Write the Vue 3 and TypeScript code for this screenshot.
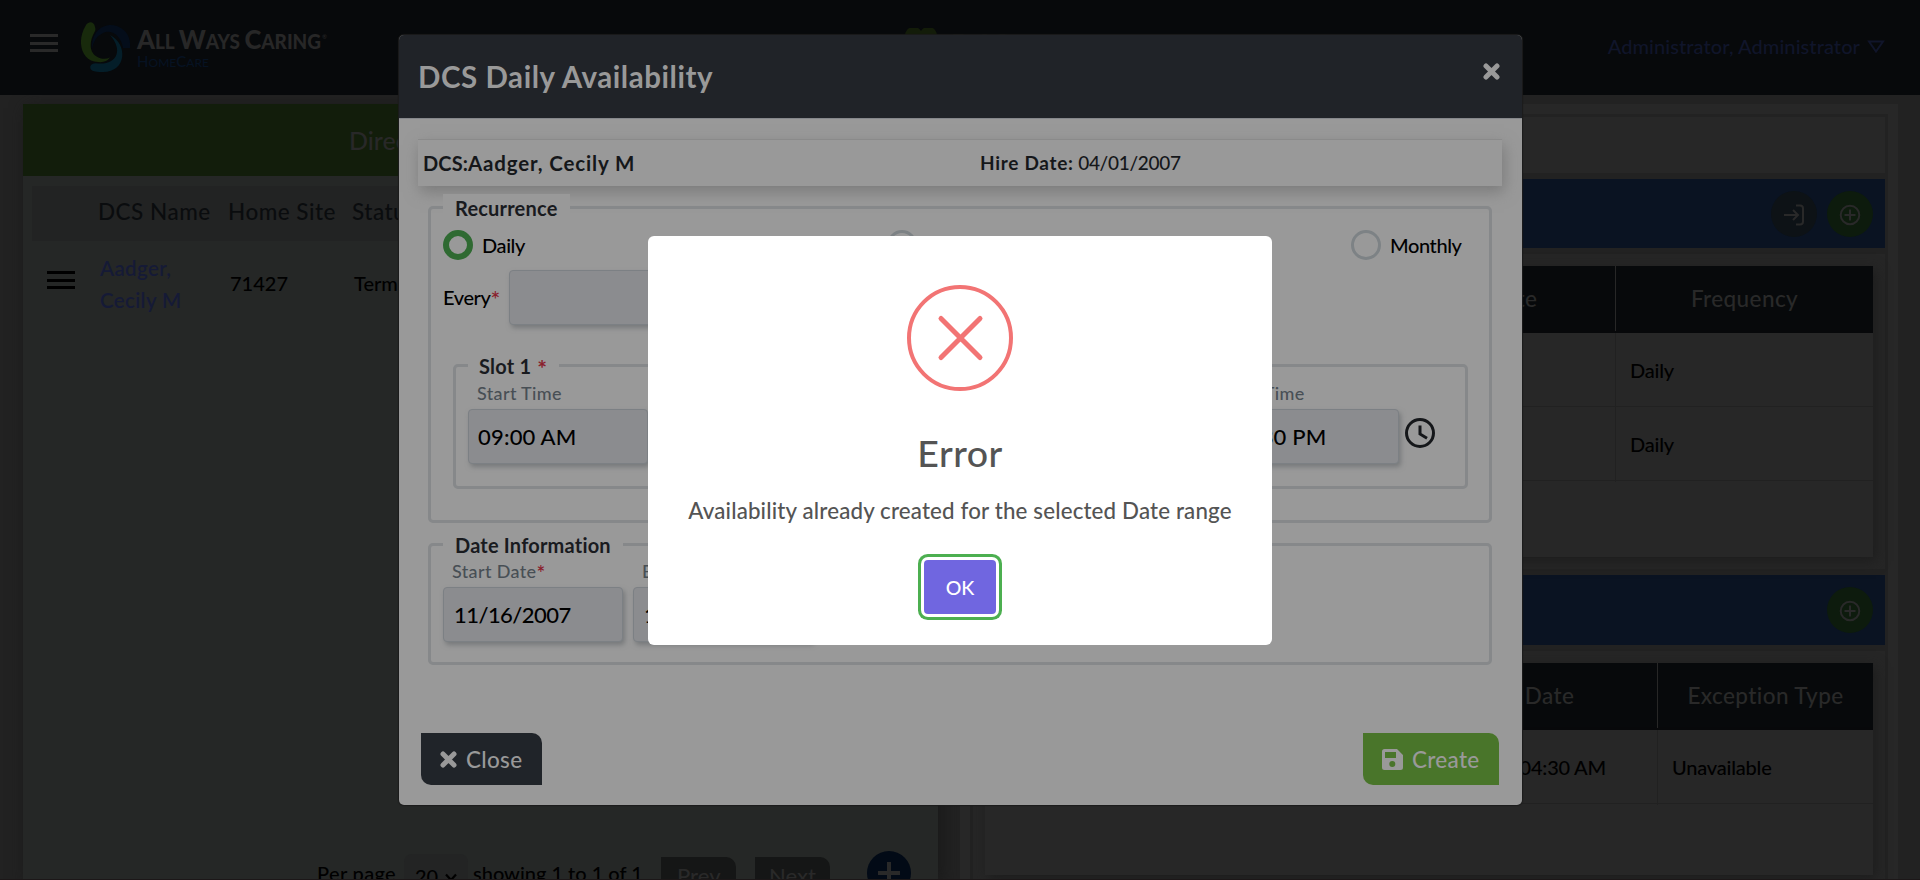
<script setup lang="ts">
interface DirectoryRow { name: string; site: string; status: string }
interface Grid { id: string; login: boolean; heads: string[]; rows: string[][] }

const rows: DirectoryRow[] = [{ name: 'Aadger, Cecily M', site: '71427', status: 'Terminated' }]
const grids: Grid[] = [
  { id: 'availability', login: true, heads: ['End Date', 'Frequency'], rows: [['', 'Daily'], ['', 'Daily']] },
  { id: 'exception', login: false, heads: ['End Date', 'Exception Type'], rows: [['04:30 AM', 'Unavailable']] },
]
const recurrences: string[] = ['Daily', 'Weekly', 'Monthly']
const selected = 'Daily'
</script>

<template>
  <div class="page">
    <header class="topbar">
      <div class="burger"><i /><i /><i /></div>
      <svg class="brand" width="250" height="56" viewBox="0 0 250 56">
        <path class="b-green" d="M14 5C13 -1 7 -1 4.500 4C-5 20 1 40 17 40Q25 41 29 35.500Q25 37.500 20 36.500C7 33 8 20 13.500 10Q15 8 14 5Z" />
        <path class="b-navy" d="M11 27C10 10 22 0 36 4C46 8 50 16 49 26H42C40 14 31 7 22 11Q13 15 11 27Z" />
        <path class="b-cyan" d="M29 13C47 22 46 50 22 50Q15 50 11 48.500Q8 46 10 43Q12 40.500 17 41.500C35 43 43 29 29 13Z" />
        <text class="b-name" x="56" y="27" textLength="184" lengthAdjust="spacingAndGlyphs"><tspan class="cap">A</tspan>LL <tspan class="cap">W</tspan>AYS <tspan class="cap">C</tspan>ARING</text>
        <text class="b-reg" x="241" y="17">®</text>
        <text class="b-sub" x="56" y="44.500" textLength="72" lengthAdjust="spacingAndGlyphs"><tspan class="cap2">H</tspan>OME<tspan class="cap2">C</tspan>ARE</text>
      </svg>
      <div class="center-logo">
        <svg width="34" height="20" viewBox="0 0 34 20"><path d="M0 10A8.800 9.500 0 0 1 16 3A8.800 9.500 0 0 1 32 10L16 20Z" /></svg>
        <span>R AS</span>
      </div>
      <div class="user">Administrator, Administrator
        <svg width="18" height="14" viewBox="0 0 18 14"><path d="M2 1.500H16L9 11.500Z" /></svg>
      </div>
    </header>

    <main class="content">
      <section class="directory">
        <h2>Direct Care Staff</h2>
        <div class="dir-table">
          <div class="dir-row dir-head"><span /><span>DCS Name</span><span>Home Site</span><span>Status</span></div>
          <div v-for="r in rows" :key="r.name" class="dir-row dir-item">
            <div class="burger dark"><i /><i /><i /></div>
            <a>{{ r.name }}</a><span>{{ r.site }}</span><span>{{ r.status }}</span>
          </div>
        </div>
        <div class="pager">
          <span class="per">Per page</span>
          <span class="select">20<svg width="12" height="9" viewBox="0 0 12 9"><path d="M1 1.500L6 7L11 1.500" /></svg></span>
          <span class="showing">showing 1 to 1 of 1</span>
          <span class="pbtn">Prev</span>
          <span class="pbtn next">Next</span>
          <svg class="add" width="44" height="44" viewBox="0 0 44 44"><circle cx="22" cy="22" r="22" /><path d="M22 11V33M11 22H33" /></svg>
        </div>
      </section>

      <section class="details">
        <div class="frame">
          <div class="blank" />
          <template v-for="g in grids" :key="g.id">
            <div class="blue" :class="g.id">
              <span v-if="g.login" class="round slate">
                <svg width="24" height="24" viewBox="0 0 24 24"><path d="M2 12H16M11 7L16 12L11 17M14 2.500H18Q21 2.500 21 5.500V18.500Q21 21.500 18 21.500H14" /></svg>
              </span>
              <span class="round green">
                <svg width="24" height="24" viewBox="0 0 24 24"><circle cx="12" cy="12" r="9.300" /><path d="M12 6.500V17.500M6.500 12H17.500" /></svg>
              </span>
            </div>
            <div class="grid-wrap" :class="g.id">
              <div class="grid">
                <div class="g-row g-head"><span v-for="h in g.heads" :key="h">{{ h }}</span></div>
                <div v-for="(r, i) in g.rows" :key="i" class="g-row g-item"><span v-for="(c, j) in r" :key="j">{{ c }}</span></div>
              </div>
            </div>
          </template>
        </div>
      </section>
    </main>
    <div class="footline" />

    <div class="layer">
      <div class="modal">
        <div class="m-head">
          <h1>DCS Daily Availability</h1>
          <svg class="m-x" width="17" height="17" viewBox="0 0 17 17"><path d="M3 3L14 14M14 3L3 14" /></svg>
        </div>
        <div class="info">
          <div class="who"><span class="dcs">DCS:</span><b>Aadger, Cecily M</b></div>
          <div class="hire"><b>Hire Date:</b> <span>04/01/2007</span></div>
        </div>
        <fieldset class="recur">
          <legend>Recurrence</legend>
          <div class="radios">
            <label v-for="r in recurrences" :key="r" :class="['r-' + r.toLowerCase()]"><i :class="{ on: r === selected }" />{{ r }}</label>
          </div>
          <div class="every"><span>Every<em>*</em></span><div class="input" /></div>
          <fieldset class="slot">
            <legend>Slot 1 <em>*</em></legend>
            <div class="slot-row">
              <div class="field"><label>Start Time</label><div class="input">09:00 AM</div></div>
              <div class="end">
                <div class="field"><label>End Time</label><div class="input">04:30 PM</div></div>
                <svg class="clock" width="30" height="30" viewBox="0 0 30 30"><circle cx="15" cy="15" r="13.500" /><path d="M15 7.500V16L22 20.200" /></svg>
              </div>
            </div>
          </fieldset>
        </fieldset>
        <fieldset class="dates">
          <legend>Date Information</legend>
          <div class="date-row">
            <div class="field"><label>Start Date<em>*</em></label><div class="input date">11/16/2007</div></div>
            <div class="field"><label>End Date<em>*</em></label><div class="input date">11/16/2007</div></div>
          </div>
        </fieldset>
        <div class="m-foot">
          <button class="close"><svg width="17" height="17" viewBox="0 0 17 17"><path d="M3 3L14 14M14 3L3 14" /></svg><span>Close</span></button>
          <button class="create">
            <svg width="21" height="21" viewBox="0 0 21 21"><path fill-rule="evenodd" d="M2.500 0H15L21 6V18.500Q21 21 18.500 21H2.500Q0 21 0 18.500V2.500Q0 0 2.500 0ZM3 3V9H14V3ZM10.300 12A3 3 0 1 0 10.300 18A3 3 0 1 0 10.300 12Z" /></svg><span>Create</span>
          </button>
        </div>
      </div>
    </div>

    <div class="layer">
      <div class="alert">
        <svg width="106" height="106" viewBox="0 0 106 106"><circle cx="53" cy="53" r="51" /><path class="bar" d="M34 33.500L73 72.500M73 33.500L34 72.500" /></svg>
        <h3>Error</h3>
        <p>Availability already created for the selected Date range</p>
        <button>OK</button>
      </div>
    </div>
  </div>
</template>

<style>
html, body { margin: 0; background: #222; overflow: hidden; }
</style>

<style scoped>
* { box-sizing: border-box; }
.page { position: relative; height: 880px; overflow: hidden; display: flex; flex-direction: column; background: #222; font-family: Lato, "Liberation Sans", sans-serif; font-weight: 500; font-size: 20px; }
h1, h2, h3, p, fieldset, legend, button { margin: 0; padding: 0; font-family: inherit; }
em { font-style: normal; color: #8a202c; font-size: 1.15em; line-height: 0; vertical-align: -3px; }
svg { display: block; flex: none; }

.topbar { position: relative; height: 95px; flex: none; background: #07090b; display: flex; align-items: flex-start; padding-left: 30px; }
.burger { width: 28px; height: 18px; display: flex; flex-direction: column; justify-content: space-between; margin-top: 34px; }
.burger i { height: 3px; background: #292929; }
.burger.dark i { background: #000; }
.brand { margin: 22px 0 0 23px; }
.b-green { fill: #182a0c; }
.b-navy { fill: #040d1a; }
.b-cyan { fill: #041e29; }
.b-name { font-weight: 900; font-size: 20px; fill: #272727; }
.cap { font-size: 27px; }
.b-reg { font-size: 6px; fill: #272727; }
.b-sub { font-size: 12px; fill: #061222; }
.cap2 { font-size: 15px; }
.center-logo { display: flex; gap: 12px; margin: 28px 0 0 574px; color: #1c1c1c; fill: #131c09; }
.center-logo span { font-size: 28px; line-height: 32px; font-weight: 700; }
.user { margin: 30px 35px 0 auto; display: flex; gap: 7px; font-size: 20px; letter-spacing: 0.08px; line-height: 33px; color: #10152a; }
.user svg { margin-top: 10px; fill: none; stroke: #10152a; stroke-width: 2; }

.content { flex: 1; min-height: 0; display: flex; gap: 22px; padding: 9px 22px 0 23px; }
.directory { width: 915px; flex: none; background: #252726; display: flex; flex-direction: column; box-shadow: 4px 4px 16px #191919; }
.directory h2 { height: 72px; background: #121d0b; color: #282828; font-size: 25px; font-weight: 500; line-height: 72px; padding-left: 326px; }
.dir-table { margin: 10px 9px 0; flex: 1; }
.dir-row { display: grid; grid-template-columns: 66px 130px 124px 1fr; }
.dir-head { height: 55px; align-items: start; background: #222323; color: #0a0c0e; font-size: 22.5px; letter-spacing: 0.5px; line-height: 52px; }
.dir-item { padding-top: 11px; line-height: 32px; color: #000; }
.dir-item .burger { margin: 19px 0 0 15px; }
.dir-item a { width: 90px; padding-left: 2px; box-sizing: content-box; color: #151a36; font-size: 20.5px; font-weight: 600; letter-spacing: 0.35px; }
.dir-item span { padding: 15px 0 0 2px; }
.pager { display: flex; height: 30px; flex: none; color: #000; padding-left: 294px; line-height: 34px; }
.per { width: 87px; padding-top: 6px; letter-spacing: 0.35px; }
.select { width: 64px; height: 44px; margin-top: 4px; padding: 1px 0 0 11px; background: #232424; border-radius: 8px; display: flex; gap: 7px; line-height: 42px; }
.select svg { margin-top: 18px; fill: none; stroke: #000; stroke-width: 2.2; }
.showing { width: 193px; padding: 6px 0 0 5px; }
.pbtn { width: 75px; height: 52px; margin-top: 7px; background: #151616; color: #292929; border-radius: 0 10px 0 10px; font-size: 22px; line-height: 38px; padding-left: 16px; }
.next { margin-left: 19px; padding-left: 14px; }
.add { margin: 1px 0 0 37px; fill: #020a16; stroke: #292929; stroke-width: 4; }
.add circle { stroke: none; }

.details { width: 938px; padding: 10px 10px 0; background: #272727; }
.frame { height: 770px; border: 3px solid #222; border-bottom: 0; background: #222; }
.blank { height: 56px; background: #272727; }
.blue { display: flex; justify-content: flex-end; gap: 10px; align-items: center; height: 69px; margin-top: 6px; padding-right: 12px; background: #0a1322; }
.blue.exception { height: 70px; }
.round { width: 46px; height: 46px; border-radius: 50%; display: flex; align-items: center; justify-content: center; }
.round svg { fill: none; stroke: #292929; stroke-width: 2; margin-top: 2px; }
.slate { background: #0d1216; }
.green { background: #0d1b0d; }
.grid-wrap { margin-top: 6px; padding: 12px; background: #262626; height: 315px; display: flex; justify-content: flex-end; }
.grid { width: 894px; background: #272727; box-shadow: 3px 4px 12px #1d1d1d; }
.availability .grid { height: 291px; }
.exception .grid { height: 212px; }
.g-row { display: grid; grid-template-columns: 250px 258px; justify-content: end; height: 74px; }
.exception .g-row { grid-template-columns: 260px 216px; }
.g-item { height: 74px; border-bottom: 1px solid #212121; color: #000; line-height: 75px; letter-spacing: -0.2px; }
.g-head { height: 67px; background: #07090b; border-bottom: 3px solid #07080a; color: #292929; font-size: 22.5px; letter-spacing: 0.4px; line-height: 65px; text-align: center; }
.g-row span + span { border-left: 1px solid #212121; }
.g-head span + span { border-left-color: #272727; }
.g-item span { padding-left: 14px; white-space: nowrap; }
.exception .g-item span:first-child { text-align: right; padding-right: 51px; }
.footline { position: absolute; left: 0; right: 0; bottom: 0; height: 1px; background: #1c1718; }

.layer { position: absolute; inset: 0; display: flex; justify-content: center; align-items: flex-start; }
.modal { width: 1123px; height: 770px; margin: 35px 0 0 1px; background: #999; border-radius: 5px; overflow: hidden; box-shadow: 0 0 1px 1px #1c1c1c; }
.m-head { height: 84px; background: #202328; border-bottom: 1px solid #85878b; display: flex; justify-content: space-between; padding: 28px 22px 0 20px; }
h1 { font-size: 29.5px; letter-spacing: 0.55px; line-height: 34px; font-weight: 700; color: #999; margin: -3px 0 0 -1px; }
.m-x { fill: none; stroke: #999; stroke-width: 5; stroke-linecap: round; }
.info { height: 47px; margin: 20px 20px 0 19px; border-top: 1px solid #8a8a8a; box-shadow: 2px 6px 14px #7b7b7b; display: grid; grid-template-columns: 557px 1fr; line-height: 46px; padding-left: 5px; color: #15171a; font-size: 20px; }
.info b { font-weight: 700; }
.who b { font-size: 20.5px; letter-spacing: 0.85px; }
.dcs { font-weight: 700; letter-spacing: 0.1px; }
.hire { font-size: 19px; line-height: 45px; letter-spacing: -0.3px; }
.hire b { letter-spacing: 0.7px; }
fieldset { border: 3px solid #86888a; border-radius: 5px; min-width: 0; }
legend { height: 27px; line-height: 29px; padding: 0 12px; font-size: 20px; letter-spacing: 0.2px; font-weight: 700; color: #191b1f; background: #999; white-space: nowrap; }
.slot legend { padding-left: 11px; }
.slot legend em { margin-left: 1px; }
.recur { width: 1064px; height: 329px; margin: 8px 0 0 29px; padding: 9px 25px 0 12px; }
.radios { display: flex; justify-content: space-between; height: 30px; line-height: 30px; color: #000; font-size: 20px; letter-spacing: -0.4px; }
.radios label { display: flex; gap: 9px; }
.r-daily { width: 83px; }
.r-weekly { width: 103px; }
.r-monthly { width: 113px; }
.radios i { flex: none; width: 30px; height: 30px; border-radius: 50%; border: 3px solid #7d8285; }
.radios i.on { border: 6px solid #2f6a32; }
.every { display: flex; margin-top: 10px; color: #000; line-height: 54px; letter-spacing: -0.4px; }
.every span { width: 66px; }
.input { width: 180px; height: 55px; border: 1px solid #7c8084; border-radius: 4px; background: #8b8c8f; box-shadow: 2px 3px 5px #77797b; color: #000; font-size: 22px; letter-spacing: 0.2px; line-height: 54px; padding-left: 9px; white-space: nowrap; }
.slot { width: 1015px; height: 137px; margin: 27px 0 0 10px; padding: 0 30px 0 12px; }
.slot-row { display: flex; justify-content: space-between; }
.field label { display: block; height: 30px; line-height: 28px; padding-left: 9px; font-size: 18px; letter-spacing: 0.35px; color: #484f55; white-space: nowrap; }
.end { display: flex; gap: 6px; }
.clock { margin-top: 39px; fill: none; stroke: #15171a; stroke-width: 3; }
.dates { width: 1064px; height: 134px; margin: 8px 0 0 29px; padding: 0 12px; }
.date-row { display: flex; gap: 10px; }
.date-row label { height: 29px; line-height: 26px; }
.input.date { padding-left: 10px; letter-spacing: -0.55px; }
.m-foot { display: flex; justify-content: space-between; margin: 68px 23px 0 22px; }
button { border: 0; display: flex; align-items: center; font-weight: 500; }
.close, .create { height: 52px; border-radius: 0 10px 0 10px; color: #999; font-size: 22.5px; letter-spacing: 0.3px; line-height: 53px; }
.close { width: 121px; padding-left: 19px; gap: 9px; background: #202429; }
.close svg { fill: none; stroke: #999; stroke-width: 5; stroke-linecap: round; }
.create { width: 136px; padding-left: 19px; gap: 9px; background: #49752a; }
.create svg { fill: #999; }

.alert { width: 624px; height: 409px; margin-top: 236px; padding-top: 49px; background: #fff; border-radius: 6px; display: flex; flex-direction: column; align-items: center; color: #545454; }
.alert svg { fill: none; stroke: #f27474; stroke-width: 4; }
.alert .bar { stroke-width: 5; stroke-linecap: round; }
h3 { margin-top: 38px; font-size: 37.5px; letter-spacing: 0.5px; line-height: 48px; font-weight: 500; }
p { margin-top: 18px; font-size: 22.3px; letter-spacing: 0.16px; line-height: 32px; white-space: nowrap; }
.alert button { width: 72px; height: 54px; margin-top: 33px; justify-content: center; background: #7066e0; border-radius: 4px; color: #fff; font-size: 19.5px; box-shadow: 0 0 0 3px #fff, 0 0 0 6px #4caf50; }
</style>
